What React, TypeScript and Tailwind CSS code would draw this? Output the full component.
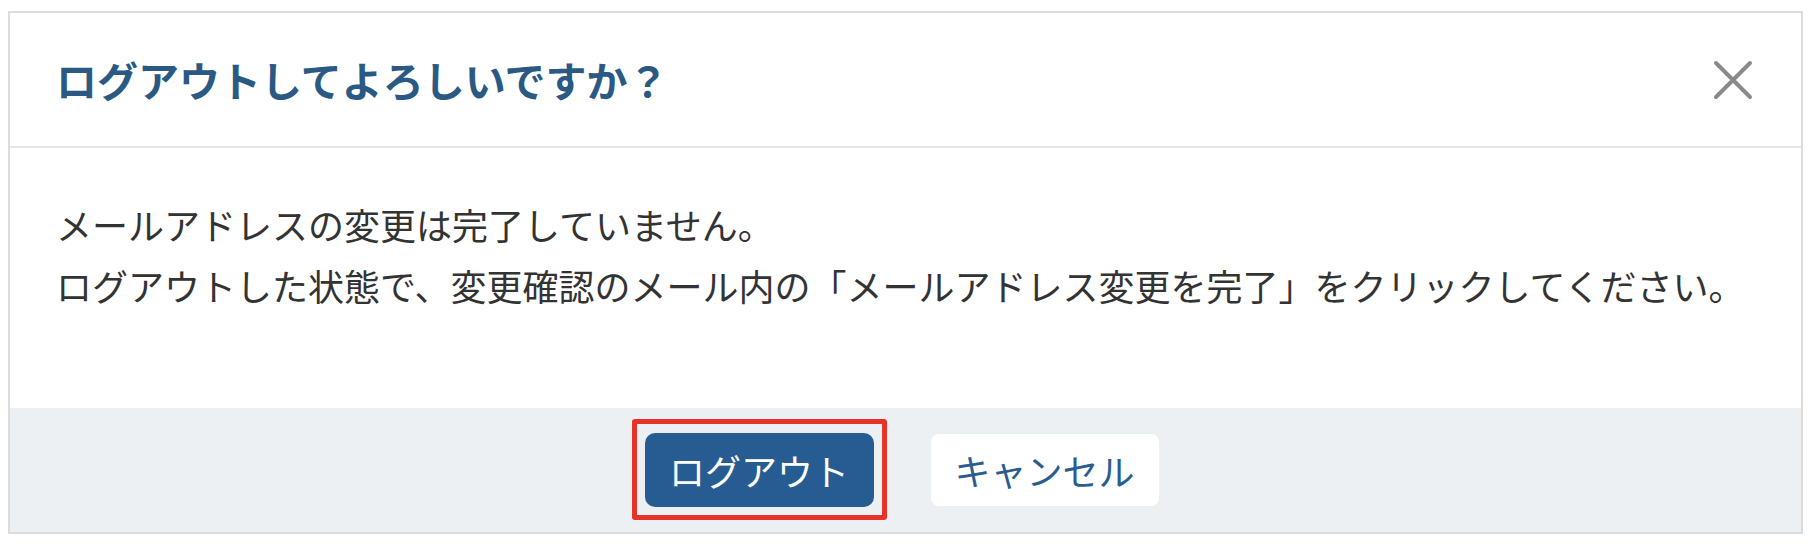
export default function App() {
  return (
    <div className="w-[1818px] h-[544px] bg-white pt-[11px] pl-[8px] font-['Noto_Sans_CJK_JP',sans-serif]">
      <div className="w-[1795px] border-2 border-[#dcdcdc] flex flex-col">
        {/* Header */}
        <div className="h-[135px] border-b-2 border-[#e6e6e6] flex items-center justify-between pl-[46px] pr-[48px]">
          <h2 className="text-[41px] font-bold text-[#2a5a83] leading-none">ログアウトしてよろしいですか？</h2>
          <button className="w-[40px] h-[40px] flex items-center justify-center">
            <svg width="40" height="40" viewBox="0 0 40 40">
              <path d="M3 3 L37 37 M37 3 L3 37" stroke="#8a8a8a" strokeWidth="4" strokeLinecap="round" fill="none" />
            </svg>
          </button>
        </div>

        {/* Body */}
        <div className="pl-[46px] pt-[46px] pb-[92px] text-[36px] leading-[61px] text-[#333333]">
          <p>メールアドレスの変更は完了していません。</p>
          <p>ログアウトした状態で、変更確認のメール内の「メールアドレス変更を完了」をクリックしてください。</p>
        </div>

        {/* Footer */}
        <div className="h-[124px] bg-[#edf0f3] flex items-center justify-center gap-[57px] pr-[8px]">
          <div className="relative">
            <button className="w-[229px] h-[74px] rounded-[10px] bg-[#275c92] text-white text-[36px] leading-none">
              ログアウト
            </button>
            <div className="absolute -left-[13px] -right-[13px] -top-[14px] -bottom-[13px] border-[5px] border-[#e5332a] rounded-[3px]" />
          </div>
          <button className="w-[228px] h-[72px] rounded-[8px] bg-white text-[#2a5c8f] text-[36px] leading-none">
            キャンセル
          </button>
        </div>
      </div>
    </div>
  );
}
